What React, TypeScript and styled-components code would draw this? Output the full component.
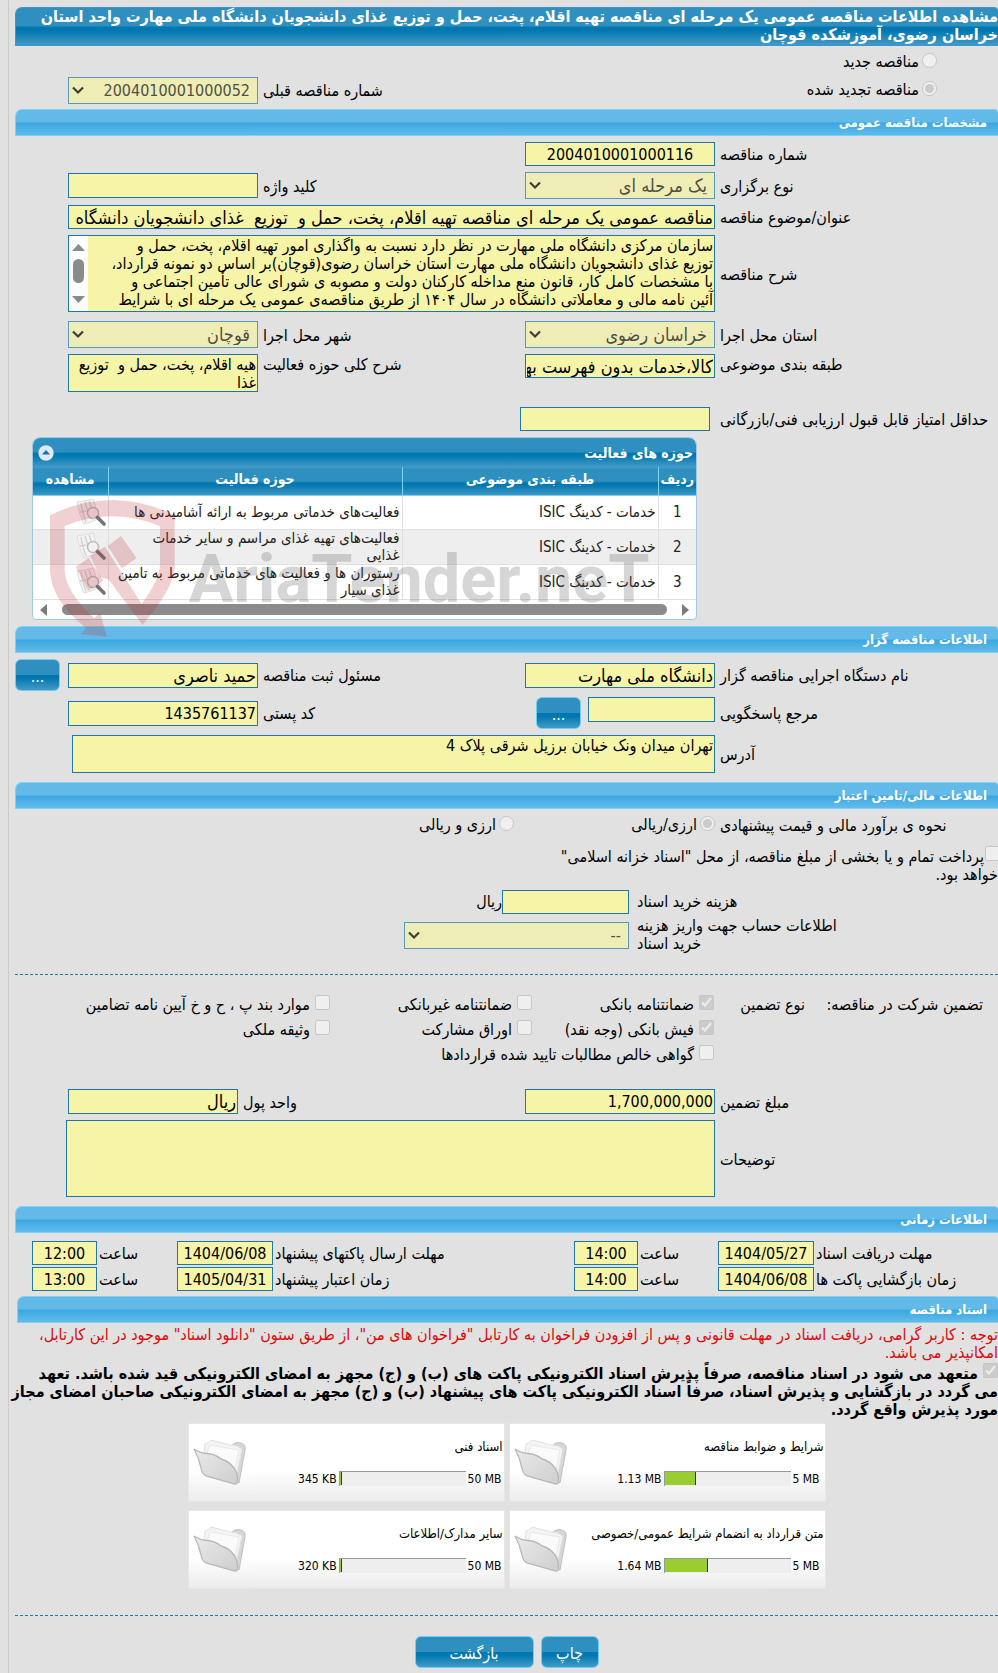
import React from "react";
import styled, { createGlobalStyle, css } from "styled-components";

const FONT = '"DejaVu Sans Condensed", "DejaVu Sans", sans-serif';

const GlobalStyle = createGlobalStyle`
  *, *::before, *::after { box-sizing: border-box; }
  body {
    margin: 0;
    background: #e1e1e1;
    color: #000;
    font: 16px/18px ${FONT};
  }
  input, select, textarea, button { font-family: ${FONT}; margin: 0; }
`;

const deepBlue = css`
  background: linear-gradient(#2f90bf 0, #2f90bf 49%, #0077b0 51%, #0077b0 60%, #439ac5 100%);
`;

const Page = styled.main`
  direction: rtl;
  margin-left: 8px;
  padding: 7px 0 5px 6px;
  border-left: 1px solid #cbcbcb;
  overflow: hidden;
`;

const Title = styled.h1`
  ${deepBlue}
  margin: 0;
  padding: 0 0 1px;
  border: 1px solid #3f95d6;
  border-width: 1px 0 1px 1px;
  border-radius: 7px 4px 0 0;
  color: #fff;
  font-size: 16px;
  line-height: 18px;
  white-space: nowrap;
`;

const SectionTitle = styled.h2<{ $inset?: boolean }>`
  margin: 0 0 0 ${(p) => (p.$inset ? 2 : 0)}px;
  padding: 0 11px;
  border: 1px solid #7dd3f7;
  border-width: 1px 0 1px 1px;
  border-radius: 7px 4px 0 0;
  background: linear-gradient(#63bae9 0, #63bae9 47%, #3aa8e1 53%, #62bbea 100%);
  color: #fff;
  font-size: 13px;
  line-height: 25px;
`;

const Body = styled.section<{ $bottom?: number; $top?: number }>`
  display: flex;
  flex-direction: column;
  gap: 6px;
  padding: ${(p) => p.$top ?? 0}px 0 ${(p) => p.$bottom ?? 9}px;
`;

const FormRow = styled.div<{ $space?: number; $top?: boolean; $lead?: number; $last?: number }>`
  display: grid;
  grid-template-columns: ${(p) => p.$lead ?? 283}px 190px 1fr ${(p) => p.$last ?? 190}px 53px;
  align-items: ${(p) => (p.$top ? "start" : "center")};
  margin-top: ${(p) => p.$space ?? 0}px;
`;

const Label = styled.label<{ $pad?: number }>`
  padding: 2px 0 0 ${(p) => p.$pad ?? 5}px;
  text-align: left;
  white-space: nowrap;
`;

const box = css`
  display: block;
  width: 100%;
  border: 1px solid #1f77a6;
  border-radius: 0;
  background: #f6f4a6;
  color: #000;
  outline: none;
`;

const Input = styled.input<{ $center?: boolean; $words?: boolean; $h?: number }>`
  ${box}
  height: ${(p) => p.$h ?? 24}px;
  padding: 0 1px;
  font-size: ${(p) => (p.$words ? 18 : 16)}px;
  text-align: ${(p) => (p.$center ? "center" : "right")};
`;

const Area = styled.textarea<{ $h: number }>`
  ${box}
  height: ${(p) => p.$h}px;
  padding: 1px;
  font-size: 16px;
  line-height: 18px;
  resize: none;
  overflow: hidden;
  white-space: pre;
`;

const Wide = styled.div<{ $end?: number }>`
  grid-column: 2 / 5;
  margin-left: ${(p) => p.$end ?? 0}px;
`;

const ScrollFrame = styled.div`
  display: flex;
  border: 1px solid #1f77a6;
  textarea { border: 0; flex: 1; }
`;

const ButtonCell = styled.div`
  padding-right: 8px;
`;

const Lookup = styled.div`
  display: flex;
  gap: 7px;
  align-items: flex-start;
  padding-left: 11px;
`;

const SelectWrap = styled.div`
  position: relative;
  svg { position: absolute; left: 4px; top: 9px; pointer-events: none; }
`;

const SelectBox = styled.select<{ $words?: boolean }>`
  ${box}
  appearance: none;
  height: 27px;
  padding: 0 7px;
  border-color: #5a99b9;
  background: #efedb6;
  color: #504f43;
  font-size: ${(p) => (p.$words ? 18 : 16)}px;
  opacity: 1;
`;

const Button = styled.button<{ $w: number }>`
  ${deepBlue}
  display: block;
  flex: none;
  width: ${(p) => p.$w}px;
  height: 32px;
  padding: 2px 0 0;
  border: 1px solid #6ecdf5;
  border-radius: 6px;
  color: #fff;
  font-size: 16px;
`;

const Tick = styled.input`
  flex: none;
  width: 15px;
  height: 15px;
  margin: 0;
`;

const Choice = styled.label<{ $gap?: number }>`
  display: flex;
  align-items: center;
  gap: ${(p) => p.$gap ?? 3}px;
  white-space: nowrap;
  input { margin-bottom: 4px; }
`;

const FirstRow = styled.div`
  display: flex;
  align-items: center;
  height: 30px;
  padding: 2px 61px 0 0;
`;

const PreviousRow = styled.div`
  display: grid;
  grid-template-columns: 1fr 135px 190px 53px;
  align-items: center;
  height: 28px;
  padding-right: 61px;
`;

const Divider = styled.hr`
  margin: 0;
  border: 0;
  border-top: 1px dashed #1f77a6;
`;

/* activity table */
const Panel = styled.div`
  position: relative;
  width: 665px;
  margin: 0 auto 0 17px;
  border: 1px solid #9fc9e3;
  border-radius: 8px 8px 4px 4px;
  background: #fff;
`;

const PanelTitle = styled.div`
  ${deepBlue}
  display: flex;
  align-items: center;
  justify-content: space-between;
  height: 29px;
  padding: 0 3px 0 5px;
  border-radius: 7px 7px 0 0;
  color: #fff;
  font-size: 14px;
  font-weight: bold;
  svg { display: block; }
`;

const Table = styled.table`
  width: 100%;
  border-collapse: collapse;
  table-layout: fixed;
  color: #222;
  font-size: 15px;
  line-height: 17px;
`;

const Th = styled.th<{ $w?: number }>`
  ${deepBlue}
  width: ${(p) => (p.$w ? p.$w + "px" : "auto")};
  height: 28px;
  padding: 0 0 5px;
  border-top: 1px solid #3f95d6;
  border-bottom: 1px solid #7dd3f7;
  border-left: 1px solid #7dd3f7;
  color: #fff;
  font-size: 14px;
  &:last-child { border-left: 0; }
`;

const Tr = styled.tr`
  &:nth-child(even) { background: #eee; }
`;

const Td = styled.td<{ $center?: boolean }>`
  height: 34px;
  padding: 0 2px;
  border-bottom: 1px solid #e0e0e0;
  border-left: 1px solid #e0e0e0;
  text-align: ${(p) => (p.$center ? "center" : "right")};
  white-space: pre;
  &:last-child { border-left: 0; padding: 0 1px; }
  svg { display: block; }
`;

const HScroll = styled.div`
  display: flex;
  direction: ltr;
  align-items: center;
  gap: 15px;
  height: 19px;
  padding: 0 7px;
`;

const Thumb = styled.span`
  flex: 1;
  height: 11px;
  border-radius: 6px;
  background: #8b8b8b;
`;

const Watermark = styled.svg`
  position: absolute;
  left: 7px;
  top: 52px;
  pointer-events: none;
`;

/* finance */
const MethodRow = styled.div`
  display: grid;
  grid-template-columns: 283px 201px 1fr;
  align-items: center;
  height: 18px;
`;

const Treasury = styled.label`
  display: block;
  margin-top: 9px;
  white-space: nowrap;
  input { margin: -4px -2px 0 1px; vertical-align: 1px; }
`;

const Fees = styled.div`
  display: grid;
  grid-template-columns: 361px 8px 127px 98px 1fr;
  gap: 3px 0;
  align-items: center;
`;

const FeeLabel = styled.label`
  justify-self: end;
  white-space: nowrap;
`;

const FeeLabelLines = styled(FeeLabel)`
  text-align: left;
  span { display: block; }
`;

const FeeInput = styled.div`
  grid-column: 3;
`;

const AccountField = styled.div`
  grid-column: 3 / 5;
`;

const Guarantee = styled.div`
  display: grid;
  grid-template-columns: 193px 91px 182px 202px 1fr;
  grid-auto-rows: 25px;
  padding: 17px 0 22px;
  align-items: center;
  white-space: nowrap;
`;

const Lead = styled.span`
  padding-right: 15px;
`;

const FirstChoice = styled(Choice)`
  grid-column-start: 3;
`;

const Times = styled.div`
  display: grid;
  grid-template-columns: 184px 96px 80px 64px 1fr 96px 80px 65px;
  gap: 2px 0;
  align-items: center;
  padding: 8px 0 5px 17px;
`;

const TimeLabel = styled.label`
  padding: 2px 0 0 2px;
  text-align: left;
  white-space: nowrap;
`;

/* documents */
const Notice = styled.p`
  margin: 3px 0;
  color: #dd0a0a;
  white-space: nowrap;
`;

const Pledge = styled.label`
  display: block;
  font-weight: bold;
  white-space: nowrap;
  input { margin: -4px 0 0 5px; vertical-align: 1px; }
`;

const Cards = styled.div`
  display: grid;
  grid-template-columns: 317px 317px;
  gap: 8px 4px;
  justify-content: center;
  padding: 4px 0 26px;
`;

const Card = styled.article`
  display: flex;
  justify-content: space-between;
  align-items: center;
  height: 79px;
  padding: 0 1px 0 4px;
  border: 1px solid #e6e6e6;
  background: linear-gradient(#fff 60%, #ececec);
  font-size: 12px;
  line-height: 16px;
`;

const CardText = styled.div`
  display: flex;
  flex-direction: column;
  gap: 16px;
`;

const CardName = styled.h3`
  margin: 0;
  font-size: 13px;
  font-weight: normal;
  white-space: nowrap;
`;

const Meter = styled.div`
  display: flex;
  direction: ltr;
  justify-content: flex-end;
  align-items: center;
  gap: 2px;
  padding-right: 1px;
`;

const Bar = styled.span`
  width: 127px;
  height: 15px;
  border-top: 1px solid #999;
  border-left: 1px solid #999;
  background: #eee;
`;

const Fill = styled.span`
  display: block;
  height: 13px;
  border-right: 1px solid #333;
  background: #9acd32;
`;

const Limit = styled.span`
  min-width: 30px;
`;

const Actions = styled.div`
  display: flex;
  justify-content: center;
  gap: 7px;
  padding-top: 20px;
`;

const Chevron = () => (
  <svg width="12" height="9" viewBox="0 0 12 9">
    <path d="M1 1.5 L6 6.5 L11 1.5" fill="none" stroke="#3f3e35" strokeWidth="2.2" />
  </svg>
);

const Select = ({ id, value, words }: { id: string; value: string; words?: boolean }) => (
  <SelectWrap>
    <SelectBox id={id} $words={words} disabled defaultValue={value}>
      <option>{value}</option>
    </SelectBox>
    <Chevron />
  </SelectWrap>
);

const SearchDoc = () => (
  <svg width="31" height="30" viewBox="0 0 31 30">
    <path d="M1 4 Q9 3 17 1 Q19 10 25 20 Q16 24 8 26 Q3 16 1 4Z" fill="#f3f3f3" stroke="#dedede" />
    <path d="M5 5 Q6 14 10 24 M9 4 L12 14 M13 3 L16 11 M4 14 L10 13" stroke="#d2d2d2" strokeWidth="1.4" fill="none" />
    <circle cx="17" cy="15" r="5.5" fill="#f1f1f1" fillOpacity=".7" stroke="#bcbcbc" strokeWidth="1.4" />
    <path d="M21.5 19.5 L28 26" stroke="#747474" strokeWidth="3.6" strokeLinecap="round" />
  </svg>
);

const Folder = ({ id }: { id: string }) => (
  <svg width="54" height="48" viewBox="0 0 54 48">
    <defs>
      <linearGradient id={id} x1="0" y1="0" x2="1" y2="1">
        <stop offset="0" stopColor="#eaeaea" />
        <stop offset="1" stopColor="#cecece" />
      </linearGradient>
    </defs>
    <path d="M36 9 L41 4.5 Q45 2.5 49 4.5 Q53 6 52 11 L46 44 L40 42Z" fill="#d6d6d6" stroke="#c0c0c0" />
    <path d="M11 15 L12 5 Q16 4 18 1 L37 6 Q44 6 49 10 L44 34Z" fill="#f4f4f4" stroke="#e2e2e2" />
    <path d="M14 15 L17 6 L46 11 L42 30" fill="#fafafa" stroke="#eaeaea" />
    <path d="M1 10 Q7 14 14 14.5 Q22 15 28 20 Q36 22 41 29 Q45 34 44.5 43 Q44 46 40 44.5 L13 37 Q9 35 8 29 Q6 19 1 10Z" fill={`url(#${id})`} stroke="#b8b8b8" strokeWidth="1.3" />
  </svg>
);

const documents = [
  { name: "شرایط و ضوابط مناقصه", used: "1.13 MB", limit: "5 MB", fill: 31 },
  { name: "اسناد فنی", used: "345 KB", limit: "50 MB", fill: 2 },
  { name: "متن قرارداد به انضمام شرایط عمومی/خصوصی", used: "1.64 MB", limit: "5 MB", fill: 43 },
  { name: "سایر مدارک/اطلاعات", used: "320 KB", limit: "50 MB", fill: 2 },
];

const activities = [
  "فعالیت‌های خدماتی مربوط به ارائه آشامیدنی ها",
  "فعالیت‌های تهیه غذای مراسم و سایر خدمات\nغذایی",
  "رستوران ها و فعالیت های خدماتی مربوط به تامین\nغذای سیار",
];

const deadlines = [
  ["مهلت دریافت اسناد", "1404/05/27", "14:00", "مهلت ارسال پاکتهای پیشنهاد", "1404/06/08", "12:00"],
  ["زمان بازگشایی پاکت ها", "1404/06/08", "14:00", "زمان اعتبار پیشنهاد", "1405/04/31", "13:00"],
];

const description = [
  "سازمان مرکزی دانشگاه ملی مهارت در نظر دارد نسبت به واگذاری امور تهیه اقلام، پخت، حمل و",
  "توزیع غذای دانشجویان دانشگاه ملی مهارت استان خراسان رضوی(قوچان)بر اساس دو نمونه قرارداد،",
  "با مشخصات کامل کار، قانون منع مداخله کارکنان دولت و مصوبه ی شورای عالی تأمین اجتماعی و",
  "آئین نامه مالی و معاملاتی دانشگاه در سال ۱۴۰۴ از طریق مناقصه‌ی عمومی یک مرحله ای با شرایط",
].join("\n");

export default function App() {
  return (
    <>
      <GlobalStyle />
      <Page dir="rtl" lang="fa">
        <Title>
          مشاهده اطلاعات مناقصه عمومی یک مرحله ای مناقصه تهیه اقلام، پخت، حمل و توزیع غذای دانشجویان دانشگاه ملی مهارت واحد استان
          <br />
          خراسان رضوی، آموزشکده قوچان
        </Title>

        <FirstRow>
          <Choice>
            <Tick type="radio" name="kind" disabled />
            مناقصه جدید
          </Choice>
        </FirstRow>
        <PreviousRow>
          <Choice>
            <Tick type="radio" name="kind" disabled defaultChecked />
            مناقصه تجدید شده
          </Choice>
          <Label htmlFor="prev">شماره مناقصه قبلی</Label>
          <Select id="prev" value="2004010001000052" />
        </PreviousRow>

        <Body $top={5} $bottom={6}>
          <SectionTitle>مشخصات مناقصه عمومی</SectionTitle>
          <FormRow>
            <Label htmlFor="num">شماره مناقصه</Label>
            <Input id="num" $center readOnly defaultValue="2004010001000116" />
          </FormRow>
          <FormRow>
            <Label htmlFor="type">نوع برگزاری</Label>
            <Select id="type" words value="یک مرحله ای" />
            <Label htmlFor="key">کلید واژه</Label>
            <Input id="key" $h={25} readOnly />
          </FormRow>
          <FormRow>
            <Label htmlFor="subject">عنوان/موضوع مناقصه</Label>
            <Wide>
              <Input
                id="subject"
                $words
                readOnly
                defaultValue="مناقصه عمومی یک مرحله ای مناقصه تهیه اقلام، پخت، حمل و  توزیع  غذای دانشجویان دانشگاه ملی مهارت"
              />
            </Wide>
          </FormRow>
          <FormRow>
            <Label htmlFor="desc">شرح مناقصه</Label>
            <Wide>
              <ScrollFrame>
                <Area id="desc" $h={75} readOnly defaultValue={description} />
                <svg width="19" height="75" viewBox="0 0 19 75">
                  <rect width="19" height="75" fill="#fcfcfc" />
                  <path d="M9.5 8 L16 15 H3Z M9.5 67 L16 60 H3Z" fill="#8b8b8b" />
                  <rect x="4" y="23" width="11" height="24" rx="5.5" fill="#8b8b8b" />
                </svg>
              </ScrollFrame>
            </Wide>
          </FormRow>
          <FormRow $space={3}>
            <Label htmlFor="province">استان محل اجرا</Label>
            <Select id="province" words value="خراسان رضوی" />
            <Label htmlFor="city">شهر محل اجرا</Label>
            <Select id="city" words value="قوچان" />
          </FormRow>
          <FormRow $top>
            <Label htmlFor="cat">طبقه بندی موضوعی</Label>
            <Input id="cat" $words readOnly defaultValue="کالا،خدمات بدون فهرست بهای واحد" />
            <Label htmlFor="scope">شرح کلی حوزه فعالیت</Label>
            <Area id="scope" $h={38} readOnly defaultValue={"هیه اقلام، پخت، حمل و  توزیع\nغذا"} />
          </FormRow>
          <FormRow $space={9} $lead={288}>
            <Label htmlFor="score" $pad={10}>حداقل امتیاز قابل قبول ارزیابی فنی/بازرگانی</Label>
            <Input id="score" readOnly />
          </FormRow>

          <Panel>
            <PanelTitle>
              حوزه های فعالیت
              <svg width="16" height="16" viewBox="0 0 16 16">
                <circle cx="8" cy="8" r="7.7" fill="#dfe8f7" />
                <path d="M8 5 L12 9.5 H4Z" fill="#0f76ad" />
              </svg>
            </PanelTitle>
            <Table>
              <thead>
                <tr>
                  <Th $w={38}>ردیف</Th>
                  <Th>طبقه بندی موضوعی</Th>
                  <Th $w={294}>حوزه فعالیت</Th>
                  <Th $w={75}>مشاهده</Th>
                </tr>
              </thead>
              <tbody>
                {activities.map((text, i) => (
                  <Tr key={text}>
                    <Td $center>{i + 1}</Td>
                    <Td>خدمات - کدینگ ISIC</Td>
                    <Td>{text}</Td>
                    <Td>
                      <SearchDoc />
                    </Td>
                  </Tr>
                ))}
              </tbody>
            </Table>
            <HScroll>
              <svg width="7" height="14" viewBox="0 0 7 14">
                <path d="M7 1 V13 L0 7Z" fill="#7b7b7b" />
              </svg>
              <Thumb />
              <svg width="7" height="14" viewBox="0 0 7 14">
                <path d="M0 1 V13 L7 7Z" fill="#7b7b7b" />
              </svg>
            </HScroll>
            <Watermark width="630" height="150" viewBox="0 0 1890 450" direction="ltr">
              <g fill="#c02830" fillOpacity=".22">
                <path
                  fillRule="evenodd"
                  d="M30 76 Q215 -16 404 76 V235 Q400 295 308 405 L205 268 L180 262 L150 198 L195 170 L305 342 Q358 270 360 225 V108 Q215 50 74 108 V240 Q76 305 163 385 L180 366 L200 440 L122 432 L138 414 Q32 330 30 240Z"
                />
                <path d="M203 168 L243 138 L290 205 L245 235Z M107 230 L146 204 L190 272 L145 302Z" />
              </g>
              <text x="446" y="335" fill="#555" fillOpacity=".24" fontFamily="Roboto, sans-serif" fontWeight="bold" fontSize="200">
                AriaTender.neT
              </text>
            </Watermark>
          </Panel>
        </Body>

        <Body>
          <SectionTitle>اطلاعات مناقصه گزار</SectionTitle>
          <FormRow>
            <Label htmlFor="org">نام دستگاه اجرایی مناقصه گزار</Label>
            <Input id="org" $h={25} $words readOnly defaultValue="دانشگاه ملی مهارت" />
            <Label htmlFor="officer">مسئول ثبت مناقصه</Label>
            <Input id="officer" $h={25} $words readOnly defaultValue="حمید ناصری" />
            <ButtonCell>
              <Button $w={45}>...</Button>
            </ButtonCell>
          </FormRow>
          <FormRow>
            <Label htmlFor="ref">مرجع پاسخگویی</Label>
            <Lookup>
              <Input id="ref" $h={25} readOnly />
              <Button $w={45}>...</Button>
            </Lookup>
            <Label htmlFor="postal">کد پستی</Label>
            <Input id="postal" $h={25} readOnly defaultValue="1435761137" />
          </FormRow>
          <FormRow>
            <Label htmlFor="address">آدرس</Label>
            <Wide $end={4}>
              <Area id="address" $h={38} readOnly defaultValue="تهران میدان ونک خیابان برزیل شرقی پلاک 4" />
            </Wide>
          </FormRow>
        </Body>

        <Body $bottom={21}>
          <SectionTitle>اطلاعات مالی/تامین اعتبار</SectionTitle>
          <MethodRow>
            <Label as="span">نحوه ی برآورد مالی و قیمت پیشنهادی</Label>
            <Choice>
              <Tick type="radio" name="method" disabled defaultChecked />
              ارزی/ریالی
            </Choice>
            <Choice>
              <Tick type="radio" name="method" disabled />
              ارزی و ریالی
            </Choice>
          </MethodRow>
          <Treasury>
            <Tick type="checkbox" disabled />
            پرداخت تمام و یا بخشی از مبلغ مناقصه، از محل "اسناد خزانه اسلامی"
            <br />
            خواهد بود.
          </Treasury>
          <Fees>
            <FeeLabel htmlFor="fee">هزینه خرید اسناد</FeeLabel>
            <FeeInput>
              <Input id="fee" readOnly />
            </FeeInput>
            <span>ریال</span>
            <span />
            <FeeLabelLines htmlFor="account">
              <span>اطلاعات حساب جهت واریز هزینه</span>
              <span>خرید اسناد</span>
            </FeeLabelLines>
            <AccountField>
              <Select id="account" value="--" />
            </AccountField>
          </Fees>
        </Body>

        <Divider />
        <Guarantee>
          <Lead>تضمین شرکت در مناقصه:</Lead>
          <span>نوع تضمین</span>
          <FirstChoice $gap={5}>
            <Tick type="checkbox" disabled defaultChecked />
            ضمانتنامه بانکی
          </FirstChoice>
          <Choice $gap={5}>
            <Tick type="checkbox" disabled />
            ضمانتنامه غیربانکی
          </Choice>
          <Choice $gap={5}>
            <Tick type="checkbox" disabled />
            موارد بند پ ، ح و خ آیین نامه تضامین
          </Choice>
          <FirstChoice $gap={5}>
            <Tick type="checkbox" disabled defaultChecked />
            فیش بانکی (وجه نقد)
          </FirstChoice>
          <Choice $gap={5}>
            <Tick type="checkbox" disabled />
            اوراق مشارکت
          </Choice>
          <Choice $gap={5}>
            <Tick type="checkbox" disabled />
            وثیقه ملکی
          </Choice>
          <FirstChoice $gap={5}>
            <Tick type="checkbox" disabled />
            گواهی خالص مطالبات تایید شده قراردادها
          </FirstChoice>
        </Guarantee>
        <Body>
          <FormRow $last={170}>
            <Label htmlFor="amount">مبلغ تضمین</Label>
            <Input id="amount" $h={25} readOnly defaultValue="1,700,000,000" />
            <Label htmlFor="unit">واحد پول</Label>
            <Input id="unit" $h={25} $words readOnly defaultValue="ریال" />
          </FormRow>
          <FormRow>
            <Label htmlFor="notes">توضیحات</Label>
            <Wide $end={-2}>
              <Area id="notes" $h={77} readOnly />
            </Wide>
          </FormRow>
        </Body>

        <SectionTitle>اطلاعات زمانی</SectionTitle>
        <Times>
          {deadlines.map((d, i) => (
            <React.Fragment key={d[0]}>
              <TimeLabel htmlFor={`d${i}a`}>{d[0]}</TimeLabel>
              <Input id={`d${i}a`} $center readOnly defaultValue={d[1]} />
              <TimeLabel htmlFor={`d${i}b`}>ساعت</TimeLabel>
              <Input id={`d${i}b`} $center readOnly defaultValue={d[2]} />
              <TimeLabel htmlFor={`d${i}c`}>{d[3]}</TimeLabel>
              <Input id={`d${i}c`} $center readOnly defaultValue={d[4]} />
              <TimeLabel htmlFor={`d${i}d`}>ساعت</TimeLabel>
              <Input id={`d${i}d`} $center readOnly defaultValue={d[5]} />
            </React.Fragment>
          ))}
        </Times>

        <SectionTitle $inset>اسناد مناقصه</SectionTitle>
        <Notice>
          توجه : کاربر گرامی، دریافت اسناد در مهلت قانونی و پس از افزودن فراخوان به کارتابل "فراخوان های من"، از طریق ستون "دانلود اسناد" موجود در این کارتابل،
          <br />
          امکانپذیر می باشد.
        </Notice>
        <Pledge>
          <Tick type="checkbox" disabled defaultChecked />
          متعهد می شود در اسناد مناقصه، صرفاً پذیرش اسناد الکترونیکی پاکت های (ب) و (ج) مجهز به امضای الکترونیکی قید شده باشد. تعهد
          <br />
          می گردد در بازگشایی و پذیرش اسناد، صرفاً اسناد الکترونیکی پاکت های پیشنهاد (ب) و (ج) مجهز به امضای الکترونیکی صاحبان امضای مجاز
          <br />
          مورد پذیرش واقع گردد.
        </Pledge>
        <Cards>
          {documents.map((d, i) => (
            <Card key={d.name}>
              <CardText>
                <CardName>{d.name}</CardName>
                <Meter>
                  <span>{d.used}</span>
                  <Bar>
                    <Fill style={{ width: d.fill }} />
                  </Bar>
                  <Limit>{d.limit}</Limit>
                </Meter>
              </CardText>
              <Folder id={`folder${i}`} />
            </Card>
          ))}
        </Cards>
        <Divider />
        <Actions>
          <Button $w={58}>چاپ</Button>
          <Button $w={119}>بازگشت</Button>
        </Actions>
      </Page>
    </>
  );
}
